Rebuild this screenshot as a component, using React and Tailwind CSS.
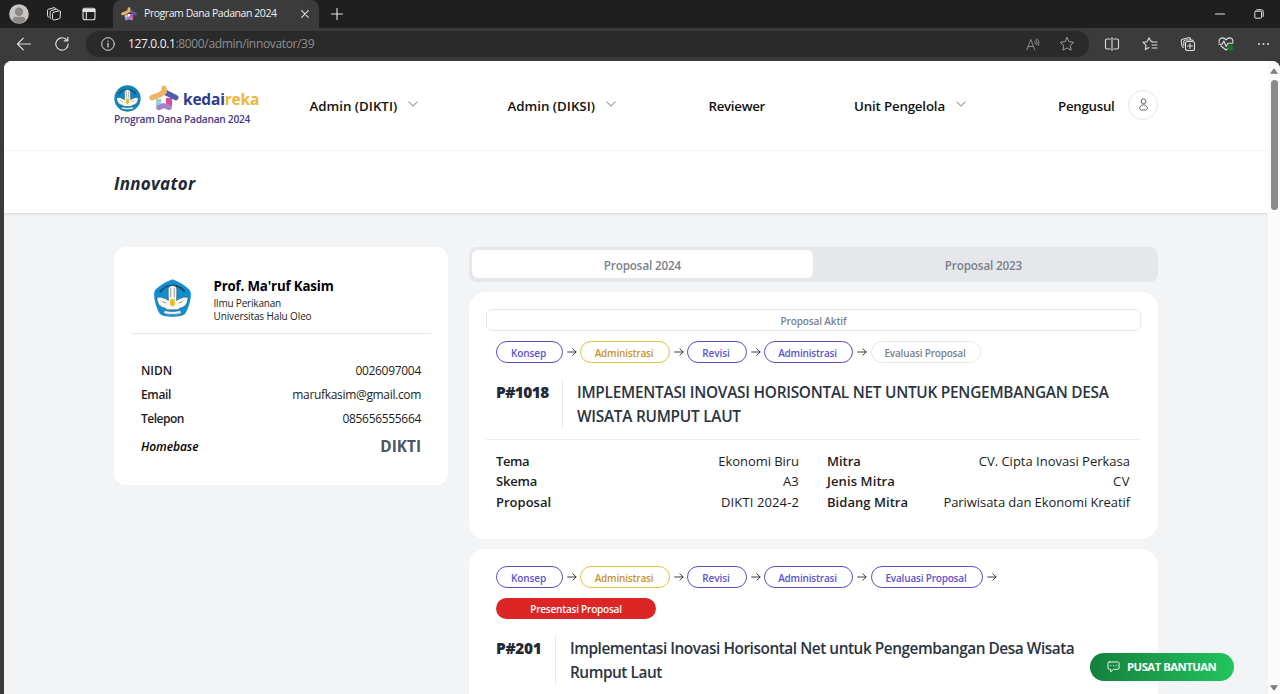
import React from "react";

function Emblem({ className, round }) {
  return (
    <svg viewBox="0 0 38 38" className={className}>
      {round ? (
        <circle cx="19" cy="19" r="18.500" fill="#0f84bd" />
      ) : (
        <path d="M19 .6 C21 .6 34.500 7.500 36.400 12 C38.200 17 34.500 29.500 31.500 33.500 C28.500 37.800 9.500 37.800 6.500 33.500 C3.500 29.500 -.2 17 1.600 12 C3.500 7.500 17 .6 19 .6Z" fill="#0f8ed0" />
      )}
      <path d="M6.800 13 A14.500 14.500 0 0 1 31.200 13" fill="none" stroke="#17343f" strokeWidth="1.800" strokeDasharray="1.500 .7" />
      <path d="M4 17.500 C6.500 18.500 8 17 10 18.500 C12 19 13.500 20 15 21 L14.800 11 C14.500 7.500 17 6.500 19 6.500 C21 6.500 23.500 7.500 23.200 11 L23 21 C24.500 20 26 19 28 18.500 C30 17 31.500 18.500 34 17.500 C34.300 22 32.500 26 29 27.500 L26 28.500 L24 30 H14 L12 28.500 L9 27.500 C5.500 26 3.700 22 4 17.500Z" fill="#f8f9f4" stroke="#24505f" strokeWidth=".5" />
      <path d="M17.300 8.500 V18 M20.700 8.500 V18 M13 23.500 L9 22" stroke="#55606a" strokeWidth=".6" fill="none" />
      <path d="M25 23.500 L29 22" stroke="#55606a" strokeWidth=".6" fill="none" />
      <path d="M17 19.500 H21 L21.500 24.500 L19 27 L16.500 24.500Z" fill="#edb92c" />
      <path d="M11 30.800 Q19 33 27 30.800 L27.500 33.500 Q19 35.800 10.500 33.500Z" fill="#eef3f6" stroke="#24505f" strokeWidth=".4" />
    </svg>
  );
}

function StarHouse({ className }) {
  return (
    <svg viewBox="0 0 30 26" className={className} fill="none" strokeLinecap="round" strokeLinejoin="round">
      <path d="M9.800 14 V21" stroke="#9bd0d8" strokeWidth="5.500" strokeLinecap="butt" />
      <path d="M20 13 V21" stroke="#df4a9e" strokeWidth="6" strokeLinecap="butt" />
      <path d="M9.700 22.600 L14.800 20.600 L20.300 22.600" stroke="#a583c4" strokeWidth="5" />
      <path d="M16.500 7.500 L26.800 12.600" stroke="#4a5fae" strokeWidth="5.400" />
      <path d="M15 3.200 L15.200 7 L9.500 10.400 L3 12.600" stroke="#f1b262" strokeWidth="5.400" />
      <path d="M12.500 12.800 L17 12.800 V18.300 Q14.700 17 12.500 18.300Z" fill="#fff" />
    </svg>
  );
}

function Chevron() {
  return (
    <svg viewBox="0 0 10 6" className="mb-1 h-[6px] w-[10px]" fill="none" stroke="#9ca3af" strokeWidth="1.100" strokeLinecap="round" strokeLinejoin="round">
      <path d="M.8 .8 L5 5 L9.200 .8" />
    </svg>
  );
}

function Arrow() {
  return (
    <span className="flex w-[17px] shrink-0 justify-center">
      <svg viewBox="0 0 10 8" className="h-2 w-[10px]" fill="none" stroke="#27272a" strokeWidth=".9" strokeLinecap="round" strokeLinejoin="round">
        <path d="M.7 4 H9 M5.900 .8 L9.100 4 L5.900 7.200" />
      </svg>
    </span>
  );
}

const line = { fill: "none", stroke: "currentColor", strokeLinecap: "round", strokeLinejoin: "round" };

function TitleBar() {
  return (
    <div className="flex h-7 bg-[#1f1f1f] text-[#e4e4e4]">
      <div className="flex w-[113px] shrink-0 items-center">
        <svg viewBox="0 0 20 20" className="ml-[9px] size-5">
          <circle cx="10" cy="10" r="9.800" fill="#c9c7c5" />
          <circle cx="10" cy="7.700" r="4.200" fill="#8b8886" />
          <path d="M3.400 16.600 Q3.600 12.800 7 12.800 H13 Q16.400 12.800 16.600 16.600 A9.600 9.600 0 0 1 3.400 16.600Z" fill="#8b8886" />
        </svg>
        <svg viewBox="0 0 16 16" className="ml-[17px] size-4" {...line} strokeWidth="1">
          <path d="M7.500 6.300 L13 4.800 Q14.500 4.500 14.500 6 L14 11.500 Q13.900 12.600 12.800 12.900 L8.300 14 Q6.700 14.300 6.600 12.800 L6.500 7.600 Q6.500 6.600 7.500 6.300Z" />
          <path d="M4.900 12.900 Q4.100 12.600 4.100 11.500 V5.900 Q4.100 4.900 5.100 4.600 L10.500 3.100 Q11.800 2.900 12 4" />
          <path d="M2.500 11.100 Q1.500 10.700 1.500 9.600 V4.500 Q1.500 3.500 2.500 3.200 L8 1.700 Q9.200 1.500 9.500 2.400" />
        </svg>
        <svg viewBox="0 0 14 14" className="ml-[20px] size-[14px]" {...line} strokeWidth="1.100">
          <rect x="1" y="1.200" width="12" height="11.600" rx="2" />
          <path d="M1.500 2.800 H12.500 M1.500 4 H12.500" strokeWidth="1.800" />
          <path d="M4.300 4 V12.500" />
        </svg>
      </div>
      <div className="flex w-[206px] shrink-0 items-center rounded-t-lg bg-[#3b3b3b]">
        <StarHouse className="ml-[8px] h-[14px] w-[16px]" />
        <span className="ml-[7px] w-[152px] text-[10.500px] tracking-[-0.44px] text-[#f0f0f0]">Program Dana Padanan 2024</span>
        <svg viewBox="0 0 8 8" className="ml-[5px] size-2" {...line} strokeWidth="1.100">
          <path d="M.7 .7 L7.300 7.300 M7.300 .7 L.7 7.300" />
        </svg>
      </div>
      <svg viewBox="0 0 12 12" className="mt-2 ml-3 size-3" {...line} strokeWidth="1.100">
        <path d="M6 .5 V11.500 M.5 6 H11.500" />
      </svg>
      <div className="ml-auto flex items-center">
        <svg viewBox="0 0 10 2" className="h-[2px] w-[10px]" {...line} strokeWidth="1.100">
          <path d="M.5 1 H9.500" />
        </svg>
        <svg viewBox="0 0 10 10" className="mr-4 ml-[29px] size-[10px]" {...line} strokeWidth="1">
          <rect x=".8" y="2.200" width="6.800" height="7" rx="1" />
          <path d="M2.800 .8 H7.500 Q9.200 .8 9.200 2.500 V7.500" />
        </svg>
      </div>
    </div>
  );
}

function AddressBar() {
  return (
    <div className="flex h-8 items-center bg-[#3b3b3b] text-[#dedede]">
      <svg viewBox="0 0 16 14" className="ml-4 h-[14px] w-4" {...line} strokeWidth="1.100">
        <path d="M14.500 7 H1.500 M7.300 1.200 L1.500 7 L7.300 12.800" />
      </svg>
      <svg viewBox="0 0 16 16" className="ml-[22px] size-4" {...line} strokeWidth="1.200">
        <path d="M14.200 8 A6.200 6.200 0 1 1 12.300 3.500 M13.800 1.300 V4.800 H10.200" />
      </svg>
      <div className="ml-4 flex h-[26px] w-[1003px] items-center rounded-full bg-[#2a2a2a]">
        <svg viewBox="0 0 14 14" className="ml-[15px] size-[14px]" {...line} strokeWidth="1">
          <circle cx="7" cy="7" r="6.300" />
          <path d="M7 6.300 V10 M7 4.100 V4.300" strokeWidth="1.200" />
        </svg>
        <span className="ml-[13px] text-[12px] tracking-[-0.35px] text-[#8f8f8f]">
          <span className="text-[#f2f2f2]">127.0.0.1</span>:8000/admin/innovator/39
        </span>
        <svg viewBox="0 0 14 13" className="ml-auto h-[13px] w-[14px] text-[#8c8c8c]" {...line} strokeWidth="1">
          <path d="M.8 12 L4.800 1.500 L8.800 12 M2.200 8.500 H7.400 M8.800 3.500 Q9.600 4.600 9.200 6 M9.800 1.900 Q11.900 4 10.900 6.800 M11 .6 Q14.300 3.500 12.700 7.500" />
        </svg>
        <svg viewBox="0 0 16 16" className="mr-[14px] ml-[19px] size-4 text-[#9a9a9a]" {...line} strokeWidth="1">
          <path d="M8 1.500 L10 5.700 L14.700 6.300 L11.300 9.500 L12.100 14.200 L8 11.900 L3.900 14.200 L4.700 9.500 L1.300 6.300 L6 5.700Z" />
        </svg>
      </div>
      <div className="ml-[15px] flex items-center gap-[22px]">
        <svg viewBox="0 0 16 16" className="size-4" {...line} strokeWidth="1.100">
          <path d="M6.200 3 H3 Q1.500 3 1.500 4.500 V11.500 Q1.500 13 3 13 H6.200 M9.800 3 H13 Q14.500 3 14.500 4.500 V11.500 Q14.500 13 13 13 H9.800 M8 1.500 V14.500" />
        </svg>
        <svg viewBox="0 0 16 16" className="size-4" {...line} strokeWidth="1.100">
          <path d="M10 5.300 L8.900 5.200 L7 1.800 L5.100 5.700 L1 6.300 L4 9.200 L3.300 13.600 L7 11.600 M10 6 H15 M10 9 H15 M10 12 H15" />
        </svg>
        <svg viewBox="0 0 16 16" className="size-4" {...line} strokeWidth="1.100">
          <rect x="5.500" y="5.500" width="9" height="9" rx="2" />
          <path d="M10 7.500 V12.500 M7.500 10 H12.500 M3.500 11.500 Q2.300 11.300 2 10 L1.200 5 Q1 3.500 2.500 3.200 L8.500 1.700 Q10 1.400 10.500 2.800 L10.800 3.700 M3.800 9.800 V6 Q3.800 4 5.800 4 H11.500 Q12.700 4 13 4.500" />
        </svg>
        <svg viewBox="0 0 16 16" className="size-4" {...line} strokeWidth="1.100">
          <path d="M1.100 6.800 Q.6 2 4.500 1.900 Q6.700 1.900 8 4 Q9.300 1.900 11.500 1.900 Q15.400 2 14.900 6.800 M2.800 9.800 L8 14 L10 12.500 M.8 8.200 H4.200 L5.800 5 L8.200 10.500 L10 7.200 H14.500" />
          <circle cx="12.300" cy="11.800" r="3" fill="#11772b" stroke="none" />
        </svg>
        <svg viewBox="0 0 16 4" className="h-1 w-4" fill="#dedede">
          <circle cx="3" cy="2" r="1" />
          <circle cx="7.500" cy="2" r="1" />
          <circle cx="12" cy="2" r="1" />
        </svg>
      </div>
    </div>
  );
}

function NavBar() {
  const item = "flex items-center gap-[11px] text-[13.300px] font-semibold text-[#111] leading-5";
  return (
    <header className="flex h-[90px] items-center border-b border-[#f1f2f4] pl-[110px]">
      <div className="w-[195.500px]">
        <div className="flex h-[27px] items-center">
          <Emblem round className="size-[27px]" />
          <StarHouse className="ml-[8px] h-[26px] w-[30px]" />
          <span className="ml-[4px] pt-px text-[15.500px] leading-[26px] font-bold tracking-[-0.2px] text-[#2c3c8f]">
            kedai<span className="text-[#f0b53c]">reka</span>
          </span>
        </div>
        <p className="text-[10.200px] leading-[15px] font-semibold tracking-[-0.27px] text-[#3f3b86]">Program Dana Padanan 2024</p>
      </div>
      <nav className="flex items-center">
        <div className={`${item} w-[198px]`}><span>Admin (DIKTI)</span><Chevron /></div>
        <div className={`${item} w-[201px]`}><span>Admin (DIKSI)</span><Chevron /></div>
        <div className={`${item} w-[145.500px] tracking-[-0.3px]`}>Reviewer</div>
        <div className={`${item} w-[204px]`}><span className="tracking-[-0.17px]">Unit Pengelola</span><Chevron /></div>
        <div className={`${item} w-[70px] tracking-[-0.28px]`}>Pengusul</div>
        <span className="mb-[2px] flex size-[30px] items-center justify-center rounded-full border border-[#e2e4e7]">
          <svg viewBox="0 0 12 14" className="h-[13px] w-[11px]" fill="none" stroke="#4b5563" strokeWidth="1">
            <circle cx="6" cy="3.500" r="2.600" />
            <path d="M6 7.300 C8.500 7.300 10.300 9.600 10.300 11.500 C10.300 12.700 9 13 6 13 C3 13 1.700 12.700 1.700 11.500 C1.700 9.600 3.500 7.300 6 7.300Z" />
          </svg>
        </span>
      </nav>
    </header>
  );
}

function ProfileCard() {
  const row = "flex h-6 items-center justify-between text-[12px] text-[#1c1c1f]";
  return (
    <section className="h-[238px] w-[334px] shrink-0 rounded-xl bg-white px-[17px] pt-[29px]">
      <div className="flex h-[58px] border-b border-[#e5e7eb] pl-[22px]">
        <Emblem className="mt-[3px] size-[39px]" />
        <div className="ml-[21.500px]">
          <h2 className="pt-px text-[13.300px] leading-[19px] font-bold tracking-[-0.17px] text-black">Prof. Ma'ruf Kasim</h2>
          <p className="text-[10px] leading-[14px] tracking-[-0.19px] text-[#222]">Ilmu Perikanan</p>
          <p className="text-[10px] leading-[13px] tracking-[-0.12px] text-[#222]">Universitas Halu Oleo</p>
        </div>
      </div>
      <dl className="px-[10px] pt-[25px]">
        <div className={row}><dt className="font-semibold tracking-[-0.07px]">NIDN</dt><dd className="tracking-[-0.3px]">0026097004</dd></div>
        <div className={row}><dt className="font-semibold tracking-[-0.36px]">Email</dt><dd className="tracking-[-0.33px]">marufkasim@gmail.com</dd></div>
        <div className={row}><dt className="font-semibold tracking-[-0.48px]">Telepon</dt><dd className="tracking-[-0.32px]">085656555664</dd></div>
        <div className="mt-[2px] flex h-7 items-center justify-between">
          <dt className="text-[12px] font-semibold tracking-[-0.05px] text-black italic">Homebase</dt>
          <dd className="text-[15.400px] font-bold text-[#4b5563]">DIKTI</dd>
        </div>
      </dl>
    </section>
  );
}

const pill = "flex h-[22px] shrink-0 items-center justify-center rounded-full border pt-[2px] pr-[2px] text-[10px] font-semibold";

function Steps({ current }) {
  return (
    <>
      <span className={`${pill} w-[67px] border-[#5b4fc0] tracking-[-0.1px] text-[#5d52cf]`}>Konsep</span>
      <Arrow />
      <span className={`${pill} w-[90px] border-[#e0c33f] tracking-[-0.18px] text-[#c8922f]`}>Administrasi</span>
      <Arrow />
      <span className={`${pill} w-[60px] border-[#5b4fc0] tracking-[-0.1px] text-[#5d52cf]`}>Revisi</span>
      <Arrow />
      <span className={`${pill} w-[89px] border-[#5b4fc0] tracking-[-0.18px] text-[#5d52cf]`}>Administrasi</span>
      <Arrow />
      {current ? (
        <span className={`${pill} ml-px w-[110px] border-[#e5e7eb] tracking-[-0.19px] text-[#7b818c]`}>Evaluasi Proposal</span>
      ) : (
        <>
          <span className={`${pill} ml-px w-[112px] border-[#5b4fc0] tracking-[-0.19px] text-[#5d52cf]`}>Evaluasi Proposal</span>
          <Arrow />
        </>
      )}
    </>
  );
}

const title = "text-[15.400px] leading-6 font-semibold text-[#2b3442]";

function ActiveProposal() {
  const row = "flex h-[20.600px] items-center justify-between";
  return (
    <section className="mt-[10px] h-[247px] rounded-[17px] bg-white px-[17px] pt-[17px] text-[13px] text-[#1c1c1f]">
      <div className="flex h-[22px] items-center justify-center rounded-md border border-[#e5e7eb] pt-[2px] text-[10px] font-semibold tracking-[-0.12px] text-[#7b818c]">
        Proposal Aktif
      </div>
      <div className="mt-[10px] flex items-center pl-[10px]"><Steps current /></div>
      <div className="mt-[17px] flex h-12 pl-[10px]">
        <span className="w-[66px] shrink-0 pt-px text-[15.400px] leading-6 font-extrabold tracking-[-0.55px] text-[#1f2937]">P#1018</span>
        <div className="border-l border-[#e5e7eb] pt-px pl-[14px]">
          <p className={`${title} tracking-[-0.26px] whitespace-nowrap`}>IMPLEMENTASI INOVASI HORISONTAL NET UNTUK PENGEMBANGAN DESA</p>
          <p className={`${title} tracking-[-0.26px]`}>WISATA RUMPUT LAUT</p>
        </div>
      </div>
      <div className="mt-[11px] grid grid-cols-[303px_303px] gap-x-7 border-t border-[#eceef0] pt-[11px] pl-[10px]">
        <dl>
          <div className={row}><dt className="font-semibold tracking-[-0.45px]">Tema</dt><dd className="tracking-[-0.05px]">Ekonomi Biru</dd></div>
          <div className={row}><dt className="font-semibold tracking-[-0.21px]">Skema</dt><dd className="tracking-[0.2px]">A3</dd></div>
          <div className={row}><dt className="font-semibold">Proposal</dt><dd className="tracking-[0.12px]">DIKTI 2024-2</dd></div>
        </dl>
        <dl>
          <div className={row}><dt className="font-semibold">Mitra</dt><dd>CV. Cipta Inovasi Perkasa</dd></div>
          <div className={row}><dt className="font-semibold tracking-[0.1px]">Jenis Mitra</dt><dd className="tracking-[0.5px]">CV</dd></div>
          <div className={row}><dt className="font-semibold tracking-[0.04px]">Bidang Mitra</dt><dd className="tracking-[-0.07px]">Pariwisata dan Ekonomi Kreatif</dd></div>
        </dl>
      </div>
    </section>
  );
}

function PastProposal() {
  return (
    <section className="mt-[10px] h-[260px] rounded-[17px] bg-white px-[27px] pt-[17px]">
      <div className="flex items-center"><Steps /></div>
      <div className="mt-[10px] flex h-[21px] w-40 items-center justify-center rounded-full bg-[#dc2626] pt-px text-[10px] font-semibold tracking-[-0.21px] text-white">
        Presentasi Proposal
      </div>
      <div className="mt-[17px] flex h-[49px]">
        <span className="w-[59px] shrink-0 pt-px text-[15.400px] leading-6 font-extrabold tracking-[-0.29px] text-[#1f2937]">P#201</span>
        <div className="border-l border-[#e5e7eb] pt-px pl-[14px]">
          <p className={`${title} tracking-[-0.46px] whitespace-nowrap`}>Implementasi Inovasi Horisontal Net untuk Pengembangan Desa Wisata</p>
          <p className={`${title} tracking-[-0.46px]`}>Rumput Laut</p>
        </div>
      </div>
    </section>
  );
}

export default function App() {
  return (
    <div className="relative flex h-[694px] w-[1280px] flex-col overflow-hidden bg-[#3b3b3b] font-['Open_Sans','Noto_Sans',sans-serif]">
      <TitleBar />
      <AddressBar />
      <div className="mt-px ml-1 flex min-h-0 flex-1 overflow-hidden rounded-t-lg bg-white">
        <div className="flex min-h-0 flex-1 flex-col overflow-hidden bg-[#f3f4f6]">
          <div className="shrink-0 bg-white shadow-sm">
            <NavBar />
            <div className="flex h-[62px] items-center pt-[3px] pl-[110px]">
              <h1 className="text-[17px] font-bold tracking-[0.28px] text-[#1f2937] italic">Innovator</h1>
            </div>
          </div>
          <main className="flex items-start gap-[21px] pt-[34px] pl-[110px]">
            <ProfileCard />
            <div className="w-[689px] shrink-0">
              <div className="flex h-[35px] rounded-lg bg-[#e5e7eb] p-[3px] pb-[4px] text-[11.700px] font-semibold tracking-[-0.15px] text-[#7b818c]">
                <button className="w-[341px] rounded-md bg-white pt-[3px]">Proposal 2024</button>
                <button className="w-[341px] pt-[3px]">Proposal 2023</button>
              </div>
              <ActiveProposal />
              <PastProposal />
            </div>
          </main>
        </div>
        <div className="flex w-3 shrink-0 flex-col items-center bg-[#fbfbfb] pt-[7px]">
          <svg viewBox="0 0 8 6" className="h-[6px] w-2" fill="#7f7f7f" stroke="#7f7f7f" strokeLinejoin="round"><path d="M4 .8 L7.300 5.300 H.7Z" /></svg>
          <div className="mt-[6px] h-[130px] w-[7px] rounded-full bg-[#8a8a8a]" />
          <svg viewBox="0 0 8 6" className="mt-auto mb-[3px] h-[6px] w-2" fill="#7f7f7f" stroke="#7f7f7f" strokeLinejoin="round"><path d="M4 5.200 L7.300 .7 H.7Z" /></svg>
        </div>
      </div>
      <button className="absolute top-[653px] left-[1090px] flex h-[28px] w-[144px] items-center rounded-full bg-linear-to-r from-[#15803d] to-[#22c55e] pl-[17px] text-[11.300px] font-bold tracking-[-0.5px] text-white">
        <svg viewBox="0 0 14 13" className="mr-[7px] h-[12px] w-[13px]" {...line} strokeWidth="1">
          <path d="M2.500 1 H11.500 Q13 1 13 2.500 V7.500 Q13 9 11.500 9 H7 L4 11.800 V9 H2.500 Q1 9 1 7.500 V2.500 Q1 1 2.500 1Z M4 5 H4.200 M6.900 5 H7.100 M9.800 5 H10" />
        </svg>
        PUSAT BANTUAN
      </button>
    </div>
  );
}
